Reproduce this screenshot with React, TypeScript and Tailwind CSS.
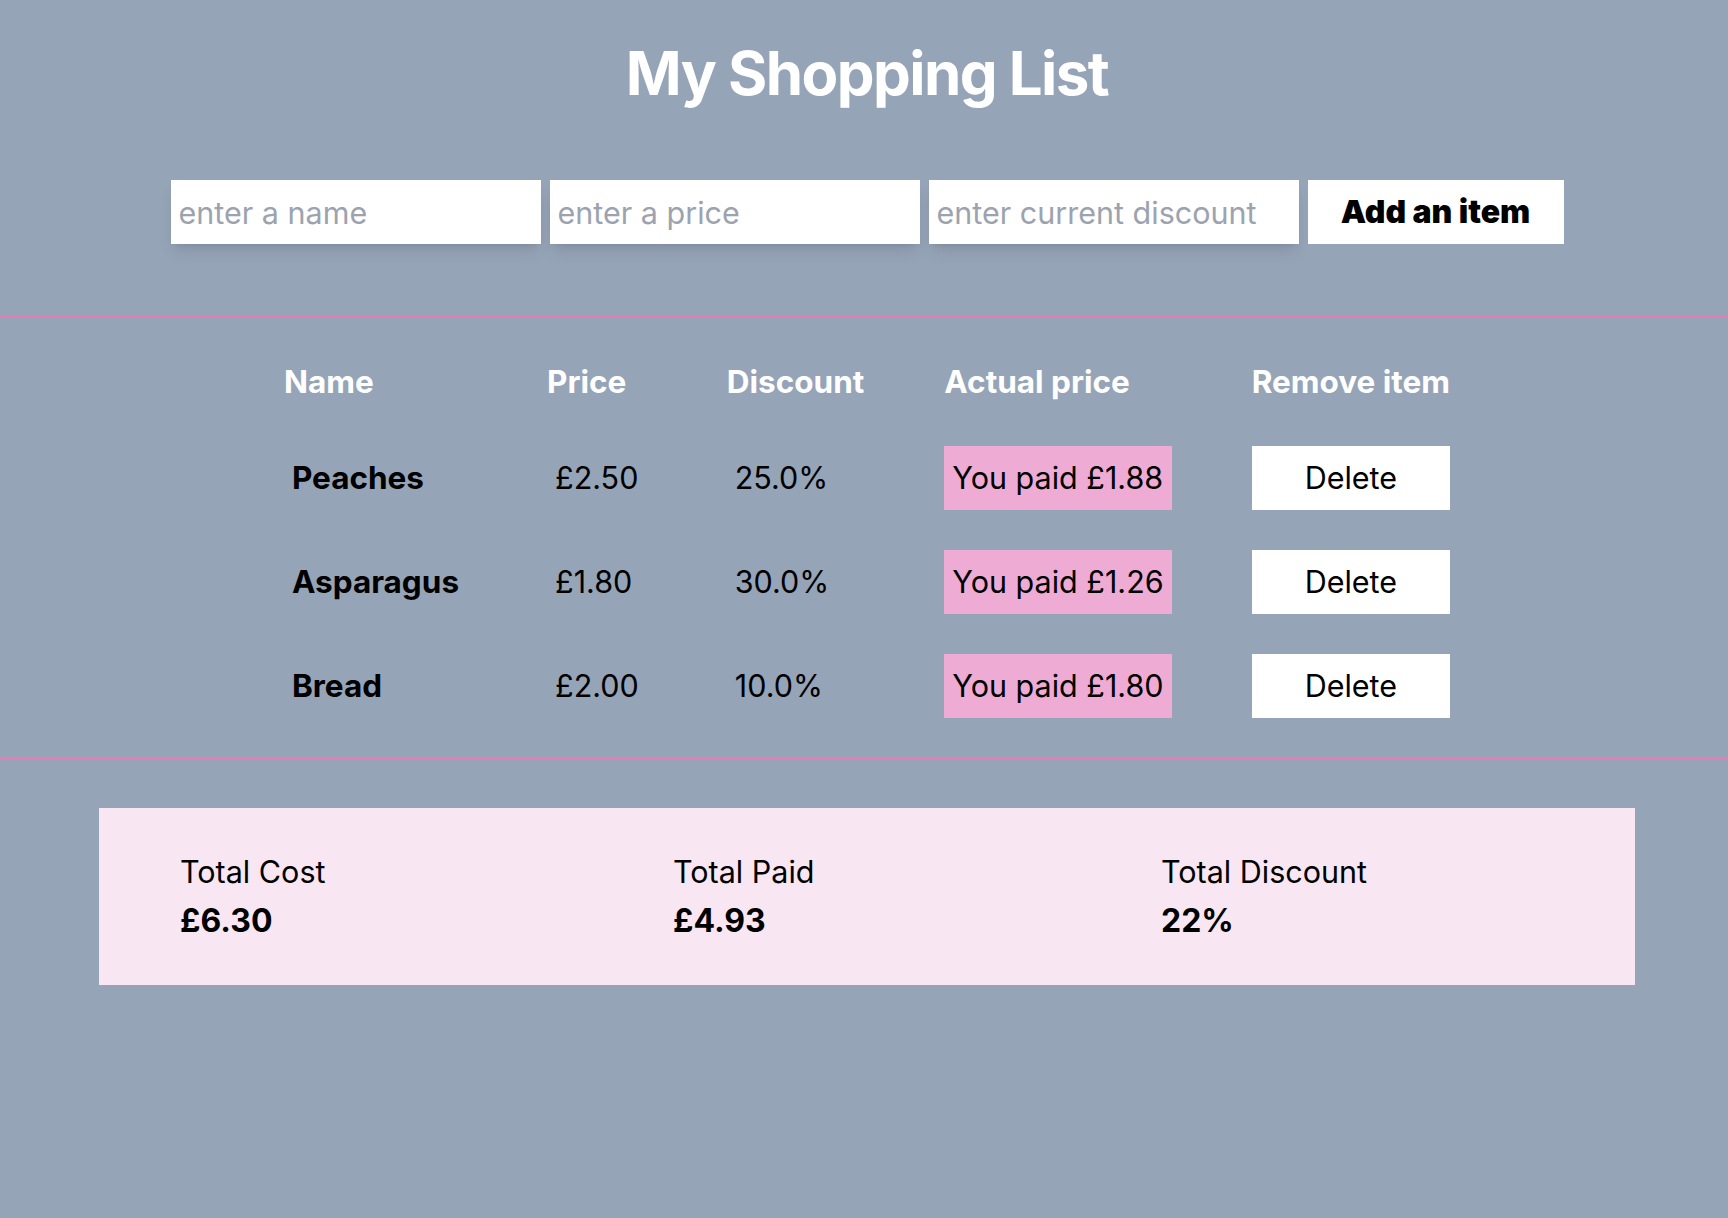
import React from 'react';

const items = [
  { name: "Peaches", price: "£2.50", discount: "25.0%", paid: "£1.88" },
  { name: "Asparagus", price: "£1.80", discount: "30.0%", paid: "£1.26" },
  { name: "Bread", price: "£2.00", discount: "10.0%", paid: "£1.80" }
];

const totals = [
  { label: "Total Cost", value: "£6.30" },
  { label: "Total Paid", value: "£4.93" },
  { label: "Total Discount", value: "22%" }
];

export default function App() {
  return (
    <div className="min-h-screen bg-[#96a4b8] pl-[6px] font-['Inter',sans-serif] text-black">
      <h1 className="pt-[43px] text-center text-6xl font-bold tracking-[-0.026em] text-white">
        My Shopping List
      </h1>

      <div className="mt-[77px] flex justify-center gap-[9px]">
        <input
          className="h-16 w-[370px] bg-white px-[8px] text-[30.5px] shadow-lg outline-none placeholder:text-[#9ca3af]"
          placeholder="enter a name"
        />
        <input
          className="h-16 w-[370px] bg-white px-[8px] text-[30.5px] shadow-lg outline-none placeholder:text-[#9ca3af]"
          placeholder="enter a price"
        />
        <input
          className="h-16 w-[370px] bg-white px-[8px] text-[30.5px] shadow-lg outline-none placeholder:text-[#9ca3af]"
          placeholder="enter current discount"
        />
        <button className="h-16 w-[256px] bg-white text-[32px] font-black">Add an item</button>
      </div>

      <div className="-ml-[6px] mt-[72px] h-[2px] bg-[#e97cb8]" />

      <table className="mx-auto border-separate border-spacing-x-20 border-spacing-y-10 text-[30.5px]">
        <thead>
          <tr className="h-12 text-left text-[31.5px] font-bold text-white">
            <th>Name</th>
            <th>Price</th>
            <th>Discount</th>
            <th>Actual price</th>
            <th>Remove item</th>
          </tr>
        </thead>
        <tbody>
          {items.map((item) => (
            <tr key={item.name} className="h-16">
              <td className="px-2 text-[31.5px] font-bold">{item.name}</td>
              <td className="px-2">{item.price}</td>
              <td className="px-2">{item.discount}</td>
              <td className="bg-[#eeabd3] px-2">You paid {item.paid}</td>
              <td>
                <button className="h-16 w-full bg-white">Delete</button>
              </td>
            </tr>
          ))}
        </tbody>
      </table>

      <div className="-ml-[6px] h-[2px] bg-[#e97cb8]" />

      <div className="mx-auto mt-[48px] grid w-[1536px] grid-cols-[493px_488px_1fr] bg-[#f8e7f2] py-[43px] pl-[81px] text-[30.5px]">
        {totals.map((t) => (
          <div key={t.label}>
            <div className="leading-[42px]">{t.label}</div>
            <div className="mt-[7px] text-[32px] font-bold leading-[42px]">{t.value}</div>
          </div>
        ))}
      </div>
    </div>
  );
}
